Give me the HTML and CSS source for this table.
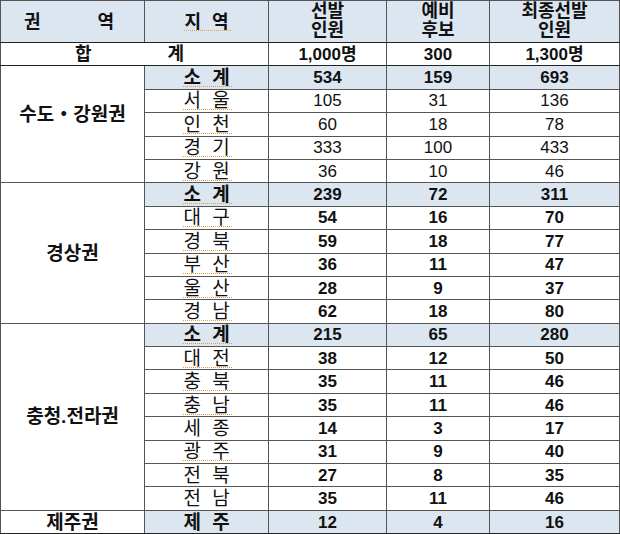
FILE: index.html
```html
<!DOCTYPE html>
<html lang="ko">
<head>
<meta charset="utf-8">
<link rel="stylesheet" href="styles.css">
</head>
<body>
<table class="tbl">
  <colgroup>
    <col class="c1"><col class="c2"><col class="c3"><col class="c4"><col class="c5">
  </colgroup>
  <thead>
    <tr class="head">
      <th class="lead sp-head"><span>권</span><span class="gap-head">역</span></th>
      <th class="name"><span class="dot">지 역</span></th>
      <th class="two">선발<br>인원</th>
      <th class="two">예비<br>후보</th>
      <th class="two">최종선발<br>인원</th>
    </tr>
  </thead>
  <tbody>
    <tr class="total">
      <td colspan="2" class="lead sp-total"><span>합</span><span class="gap-total">계</span></td>
      <td>1,000명</td><td>300</td><td>1,300명</td>
    </tr>

    <tr class="sub grp">
      <td rowspan="5" class="region r-sudo">수도・강원권</td>
      <td class="name"><span class="dot">소 계</span></td><td>534</td><td>159</td><td>693</td>
    </tr>
    <tr class="reg"><td class="name"><span class="dot">서 울</span></td><td>105</td><td>31</td><td>136</td></tr>
    <tr class="reg"><td class="name"><span class="dot">인 천</span></td><td>60</td><td>18</td><td>78</td></tr>
    <tr class="reg"><td class="name"><span class="dot">경 기</span></td><td>333</td><td>100</td><td>433</td></tr>
    <tr class="reg"><td class="name"><span class="dot">강 원</span></td><td>36</td><td>10</td><td>46</td></tr>

    <tr class="sub grp">
      <td rowspan="6" class="region">경상권</td>
      <td class="name"><span class="dot">소 계</span></td><td>239</td><td>72</td><td>311</td>
    </tr>
    <tr class="bnum"><td class="name"><span class="dot">대 구</span></td><td>54</td><td>16</td><td>70</td></tr>
    <tr class="bnum"><td class="name"><span class="dot">경 북</span></td><td>59</td><td>18</td><td>77</td></tr>
    <tr class="bnum"><td class="name"><span class="dot">부 산</span></td><td>36</td><td>11</td><td>47</td></tr>
    <tr class="bnum"><td class="name"><span class="dot">울 산</span></td><td>28</td><td>9</td><td>37</td></tr>
    <tr class="bnum"><td class="name"><span class="dot">경 남</span></td><td>62</td><td>18</td><td>80</td></tr>

    <tr class="sub grp">
      <td rowspan="8" class="region">충청.전라권</td>
      <td class="name"><span class="dot">소 계</span></td><td>215</td><td>65</td><td>280</td>
    </tr>
    <tr class="bnum"><td class="name"><span class="dot">대 전</span></td><td>38</td><td>12</td><td>50</td></tr>
    <tr class="bnum"><td class="name"><span class="dot">충 북</span></td><td>35</td><td>11</td><td>46</td></tr>
    <tr class="bnum"><td class="name"><span class="dot">충 남</span></td><td>35</td><td>11</td><td>46</td></tr>
    <tr class="bnum"><td class="name"><span>세 종</span></td><td>14</td><td>3</td><td>17</td></tr>
    <tr class="bnum"><td class="name"><span class="dot">광 주</span></td><td>31</td><td>9</td><td>40</td></tr>
    <tr class="bnum"><td class="name"><span>전 북</span></td><td>27</td><td>8</td><td>35</td></tr>
    <tr class="bnum"><td class="name"><span>전 남</span></td><td>35</td><td>11</td><td>46</td></tr>

    <tr class="sub grp last">
      <td class="region jeju">제주권</td>
      <td class="name"><span>제 주</span></td><td>12</td><td>4</td><td>16</td>
    </tr>
  </tbody>
</table>
</body>
</html>
```

FILE: styles.css
```css
html, body {
  margin: 0;
  padding: 0;
  background: #ffffff;
}

.tbl {
  border-collapse: collapse;
  table-layout: fixed;
  width: 619px;
  font-family: "Liberation Sans", "Noto Sans CJK KR", sans-serif;
  font-size: 17px;
  color: #111;
  border: 1px solid #333;
}

.c1 { width: 144px; }
.c2 { width: 124px; }
.c3 { width: 118px; }
.c4 { width: 103px; }
.c5 { width: 130px; }

.tbl th,
.tbl td {
  border: 1px solid #555;
  padding: 0;
  text-align: center;
  vertical-align: middle;
  line-height: 1;
}

.head th {
  height: 42px;
  box-sizing: border-box;
  background: #dce6f1;
  font-weight: 700;
  font-size: 18px;
  border-bottom: 1px solid #222;
}

.head th.two {
  font-size: 18px;
  line-height: 19px;
  vertical-align: top;
  padding-top: 1px;
}

.tbl .lead {
  text-align: left;
}

.tbl .sp-head {
  padding-left: 23px;
}

.gap-head {
  margin-left: 57px;
}

.tbl .sp-total {
  padding-left: 74px;
  font-size: 18px;
}

.gap-total {
  margin-left: 76px;
}

.total td {
  height: 22px;
  font-weight: 700;
  border-bottom: 1px solid #222;
}

.tbl tbody tr {
  height: 23.4px;
}

.grp td {
  border-top: 1.5px solid #222;
}

.sub td {
  font-weight: 700;
  background: #dce6f1;
}

.sub td.region {
  background: #ffffff;
}

.region {
  font-weight: 700;
  font-size: 19px;
}

.r-sudo {
  padding-bottom: 20px !important;
}

.name {
  font-size: 19px;
}

.name span {
  letter-spacing: 3px;
  margin-right: -3px;
}

.bnum td {
  font-weight: 700;
}

.bnum td.name {
  font-weight: 400;
}

.reg td {
  font-weight: 400;
}

.dot {
  text-decoration: underline dotted #e3a03a;
  text-decoration-thickness: 1px;
  text-underline-offset: 2px;
}

.last td {
  height: 20px;
  border-bottom: 1px solid #222;
}
```
